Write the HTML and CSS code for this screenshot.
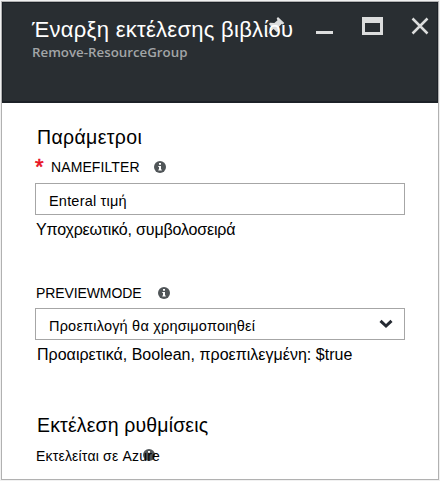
FILE: index.html
```html
<!DOCTYPE html>
<html lang="el">
<head>
<meta charset="utf-8">
<title>Remove-ResourceGroup</title>
<link rel="stylesheet" href="styles.css">
</head>
<body>
<main class="blade">
  <header class="blade-header">
    <div class="heading">
      <h1><span>Έναρξη εκτέλεσης βιβλίου</span></h1>
      <p class="subtitle"><span>Remove-ResourceGroup</span></p>
    </div>
    <div class="controls">
      <svg class="pin" width="18" height="18" viewBox="0 0 18 18"><path d="M11 0L17.300 6L15.700 7.500L14.600 7L11.500 10.200L11.300 14L10 15.300L6.600 12L1 17L5.300 10.500L1.800 7L3.200 5.800L7.300 6L10.500 3.200L9.700 1.500Z"/></svg>
      <svg class="minimize" width="17" height="18" viewBox="0 0 17 18"><path d="M0 14h17v3H0z"/></svg>
      <svg class="maximize" width="21" height="18" viewBox="0 0 21 18"><path fill-rule="evenodd" d="M0 0h21v18H0zM3 6v9h15V6z"/></svg>
      <svg class="close" width="18" height="18" viewBox="0 0 18 18"><path d="M1.500 1.500l15 15M16.500 1.500l-15 15"/></svg>
    </div>
  </header>
  <section class="content">
    <h2 class="params-title"><span>Παράμετροι</span></h2>
    <div class="label name-label">
      <span class="required">*</span><span class="name-text">NAMEFILTER</span>
      <svg class="info" width="12" height="12" viewBox="0 0 12 12"><circle cx="6" cy="6" r="6"/><path d="M5 2h2v1.800H5zM4.300 5H7v3.500h.8v1H4.300v-1H5V6h-.7z"/></svg>
    </div>
    <div class="field"><span class="value-text">Enteral τιμή</span></div>
    <p class="hint name-hint"><span>Υποχρεωτικό, συμβολοσειρά</span></p>
    <div class="label mode-label">
      <span class="mode-text">PREVIEWMODE</span>
      <svg class="info" width="12" height="12" viewBox="0 0 12 12"><circle cx="6" cy="6" r="6"/><path d="M5 2h2v1.800H5zM4.300 5H7v3.500h.8v1H4.300v-1H5V6h-.7z"/></svg>
    </div>
    <div class="field"><span class="select-text">Προεπιλογή θα χρησιμοποιηθεί</span>
      <svg class="chevron" width="14" height="10" viewBox="0 0 14 10"><path d="M1.500 1.800L7 7L12.500 1.800"/></svg>
    </div>
    <p class="hint mode-hint"><span>Προαιρετικά, Boolean, προεπιλεγμένη: $true</span></p>
    <h2 class="run-title"><span>Εκτέλεση ρυθμίσεις</span></h2>
    <div class="label run-label">
      <span class="run-text">Εκτελείται σε Azure</span>
      <svg class="info under" width="12" height="12" viewBox="0 0 12 12"><circle cx="6" cy="6" r="6"/><path d="M5 2h2v1.800H5z"/></svg>
    </div>
  </section>
</main>
</body>
</html>
```
FILE: styles.css
```css
* { box-sizing: border-box; }
body { margin: 0; background: #f1f1f1; color: #000; font-family: "Liberation Sans", Arial, sans-serif; }
h1, h2, p { margin: 0; font-weight: 400; white-space: nowrap; }
svg { display: block; flex: none; }
.blade { width: 438px; height: 479px; margin: 1px; border: 1px solid #b1b1b1; background: #fff; overflow: hidden; }
.blade-header { position: relative; height: 101px; padding: 14px 0 0 29px; background: #292e32; border: 1px solid #1c2127; border-bottom-width: 2px; }
h1 { position: relative; z-index: 1; color: #fff; font-size: 22px; line-height: 26px; letter-spacing: .28px; }
.subtitle { color: #a2a5a7; font: 600 13.300px/18px "Open Sans", sans-serif; }
.controls { position: absolute; top: 14px; right: 8px; display: flex; fill: #dcdddd; }
.minimize { margin-left: 31px; }
.maximize { margin-left: 29px; }
.close { margin-left: 28px; stroke: #dcdddd; stroke-width: 2.500; }
.content { padding: 22px 0 0 33px; }
h2 { padding-left: 2px; font-size: 19.500px; line-height: 24px; letter-spacing: .35px; }
.label { display: flex; align-items: center; height: 16px; white-space: nowrap; font-size: 14px; line-height: 16px; }
.name-label { margin-top: 10px; }
.required { width: 16px; height: 16px; color: #e81123; font-size: 22px; line-height: 16px; -webkit-text-stroke: .6px #e81123; }
.name-text { letter-spacing: .1px; }
.info { margin: -1px 0 0 14px; fill: #505558; }
.info path { fill: #fff; }
.field { display: flex; align-items: center; justify-content: space-between; width: 370px; height: 32px; border: 1px solid #a6a6a6; padding: 3px 11px 0 13px; font-size: 14.500px; letter-spacing: .2px; white-space: nowrap; }
.name-label + .field { margin-top: 8px; }
.hint { padding-left: 1px; font-size: 16px; line-height: 20px; margin-top: 5px; }
.name-hint { letter-spacing: -.17px; }
.mode-hint { padding-left: 2px; letter-spacing: .02px; }
.mode-label { margin-top: 45px; }
.mode-text { padding-left: 1px; letter-spacing: -.1px; }
.mode-label .info { margin-left: 17px; }
.mode-label + .field { margin-top: 7px; }
.chevron { margin-top: -3px; fill: none; stroke: #252a32; stroke-width: 3; }
.run-title { margin-top: 48px; letter-spacing: .15px; }
.run-label { margin-top: 11px; font-size: 14px; }
.run-text { position: relative; z-index: 1; padding-left: 1px; letter-spacing: .2px; }
.under { margin: -3px 0 0 -17px; }
```
